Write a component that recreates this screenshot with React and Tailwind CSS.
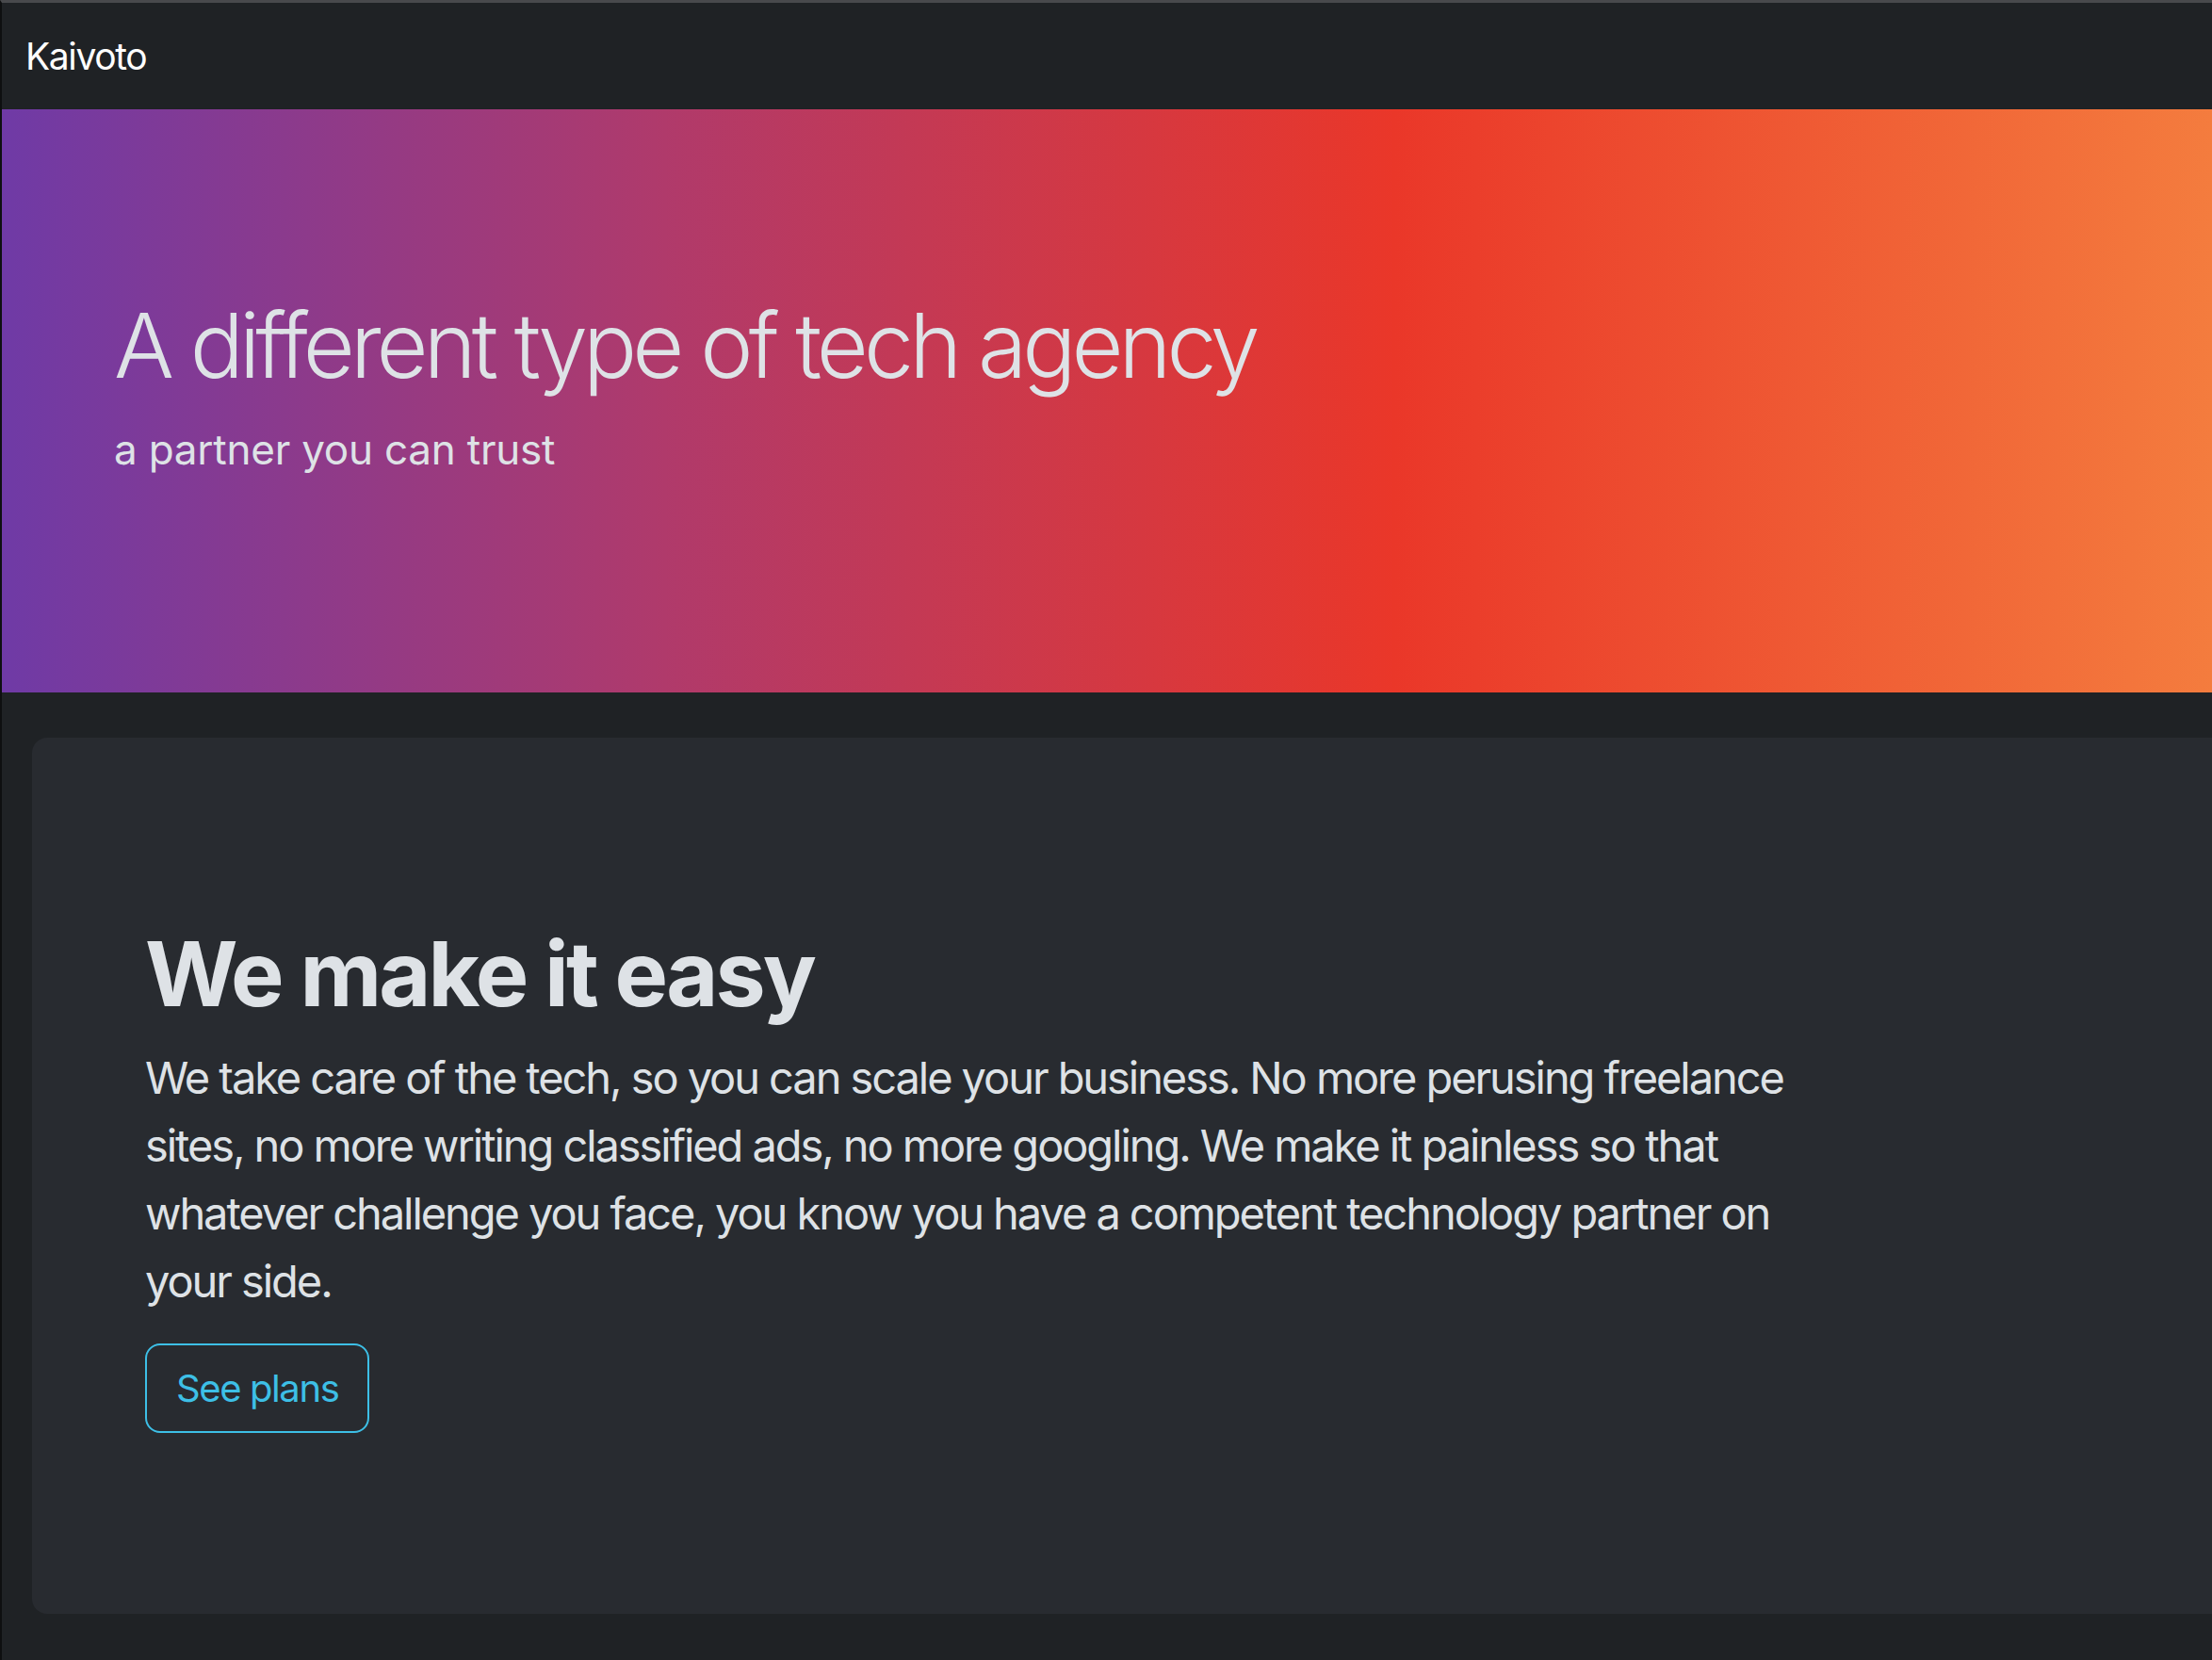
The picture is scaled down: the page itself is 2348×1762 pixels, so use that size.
export default function App() {
  return (
    <div
      className="min-h-[1762px] w-full overflow-hidden bg-[#1f2225] border-t-[3px] border-t-[#48494c] border-l-[2px] border-l-[#0e0f10]"
      style={{ fontFamily: "Inter, 'Noto Sans', sans-serif" }}
    >
      <nav className="h-[113px] flex items-center pl-[25px] bg-[#1f2225]">
        <span className="text-[39px] leading-none text-white tracking-[-0.035em]">Kaivoto</span>
      </nav>
      <header className="h-[619px] pl-[119px] pt-[194px] bg-[linear-gradient(90deg,#6f3aa6_0%,#b03a6b_30%,#ea3729_63%,#f47c3e_100%)]">
        <h1 className="text-[95px] leading-[1.2] font-light text-[#dee2e6] tracking-[-0.052em]">
          A different type of tech agency
        </h1>
        <p className="mt-[20px] text-[44px] leading-[1.5] text-[#dee2e6] tracking-[-0.005em]">a partner you can trust</p>
      </header>
      <main className="pt-[48px] pl-[32px] mr-[-40px]">
        <section className="h-[930px] rounded-[16px] bg-[#282b30] pl-[120px] pt-[194px]">
          <h2 className="text-[95px] leading-[1.2] font-bold text-[#dee2e6] tracking-[-0.03em]">
            We make it easy
          </h2>
          <p className="mt-[17px] max-w-[1780px] text-[47px] leading-[72px] text-[#dee2e6] tracking-[-0.044em]">
            We take care of the tech, so you can scale your business. No more perusing freelance sites, no more
            writing classified ads, no more googling. We make it painless so that whatever challenge you face, you
            know you have a competent technology partner on your side.
          </p>
          <button className="mt-[30px] h-[95px] px-[31px] rounded-[16px] border-2 border-[#3dbfe6] text-[#3dbfe6] text-[40px] leading-[1.5] tracking-[-0.035em]">
            See plans
          </button>
        </section>
      </main>
    </div>
  );
}
